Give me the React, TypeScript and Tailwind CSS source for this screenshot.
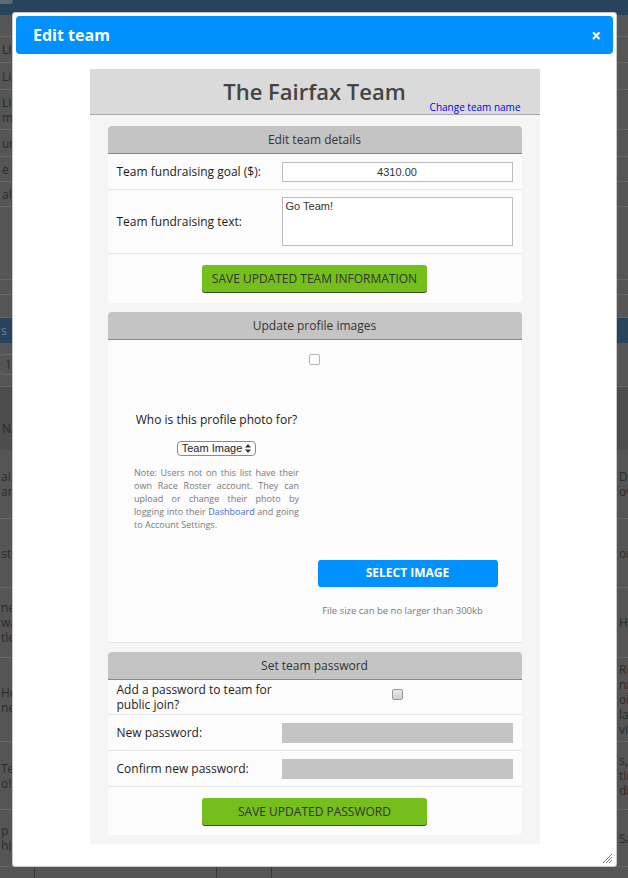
import React from "react";

const bgRows = [
  { h: "h-[22px]", l: "", r: "" },
  { h: "h-[26px]", l: "Lin", r: "" },
  { h: "h-[27px]", l: "Lin", r: "" },
  { h: "h-[40px]", l: "Lin\nm-", r: "" },
  { h: "h-[27px]", l: "un", r: "" },
  { h: "h-[25px]", l: "e P", r: "" },
  { h: "h-[25px]", l: "al", r: "" },
  { h: "h-[73px]", l: "", r: "" },
  { h: "h-[15px]", l: "", r: "" },
  { h: "h-[23px]", l: "", r: "" },
];

const tableRows = [
  { h: "h-[69px]", l: "ai\nam", r: "De\nov" },
  { h: "h-[69px]", l: "ste", r: "on" },
  { h: "h-[70px]", l: "ne\nwa\ntle", r: "Ha" },
  { h: "h-[84px]", l: "Ho\nne", r: "Ro\nnn\noin\nla\nvi" },
  { h: "h-[68px]", l: "Tea\no!", r: "s,\ntin\ndi" },
  { h: "h-[57px]", l: "p c\nhin", r: "Sa" },
];

function Background() {
  return (
    <div className="text-[12px] leading-[15px] text-[#2b2b2b]">
      <div className="h-[15px] bg-[#27445c]">
        <div className="h-[4px] w-[13px] rounded-br-[4px] bg-[#5a6a78]" />
      </div>
      {bgRows.map((r, i) => (
        <div key={i} className={`flex items-center border-b border-[#646464] ${r.h}`}>
          <div className="w-[619px] shrink-0 whitespace-pre-line pl-[2px]">{r.l}</div>
          <div className="whitespace-pre-line">{r.r}</div>
        </div>
      ))}
      <div className="flex h-[25px] items-center bg-[#27445c] pl-[1px] text-[#6f8598]">s</div>
      <div className="flex h-[44px] items-center border-b border-[#646464]">
        <span className="ml-[-6px] rounded-full border border-[#6a6a6a] px-[10px] py-[2px]">1</span>
      </div>
      <div className="flex h-[63px] items-end bg-[#4d4d4d] pb-[14px] pl-[2px]">NA</div>
      {tableRows.map((r, i) => (
        <div key={i} className={`flex items-center border-b border-[#646464] ${r.h}`}>
          <div className="w-[619px] shrink-0 whitespace-pre-line pl-[1px]">{r.l}</div>
          <div className="whitespace-pre-line">{r.r}</div>
        </div>
      ))}
      <div className="flex h-[20px]">
        <div className="w-[35px] border-r border-[#3a3a3a]" />
        <div className="w-[182px] border-r border-[#3a3a3a]" />
        <div className="w-[55px] border-r border-[#3a3a3a]" />
      </div>
    </div>
  );
}

function CardHeader({ children }: { children: React.ReactNode }) {
  return (
    <div className="h-[28px] border-b border-[#888] bg-[#c4c4c4] text-center text-[12px] leading-[27px] text-[#333]">
      {children}
    </div>
  );
}

function GreenButton({ children }: { children: React.ReactNode }) {
  return (
    <button className="mx-auto block h-[27px] w-[225px] rounded-[3px] bg-[#74bf1b] text-[12px] text-[#333] uppercase shadow-[0_1px_0_#3b4a2a]">
      {children}
    </button>
  );
}

// justified note, one line per block so it wraps like the reference
function NoteLine({ children, last }: { children: React.ReactNode; last?: boolean }) {
  return (
    <div className={`whitespace-nowrap ${last ? "text-left" : "text-justify [text-align-last:justify]"}`}>
      {children}
    </div>
  );
}

export default function App() {
  return (
    <div className="relative h-[878px] w-[628px] overflow-hidden bg-[#555] font-['Open_Sans',sans-serif]">
      <Background />

      {/* modal */}
      <div className="absolute left-[12px] top-[12px] h-[855px] w-[605px] rounded-[3px] border border-[#c8c8c8] bg-white p-[3px]">
        <div className="flex h-[38px] items-center justify-between rounded-[4px] bg-[#0091ff] pl-[17px] pr-[12px] text-white">
          <span className="text-[16px] font-bold">Edit team</span>
          <span className="text-[17px] font-bold leading-none">×</span>
        </div>

        <div className="mx-auto mt-[15px] w-[450px] bg-[#f5f5f5] pb-[9px]">
          <div className="h-[46px] border-b border-[#a8a8a8] bg-[#dadada]">
            <div className="pt-[7px] text-center text-[22px] leading-[30px] font-semibold text-[#444]">
              The Fairfax Team
            </div>
            <div className="-mt-[5px] pr-[19px] text-right text-[10px] leading-[12px] text-[#0000ee]">
              Change team name
            </div>
          </div>

          {/* Edit team details */}
          <div className="mx-[18px] mt-[11px] overflow-hidden rounded-[4px] bg-[#fcfcfc]">
            <CardHeader>Edit team details</CardHeader>
            <div className="flex h-[36px] items-center border-b border-[#e6e6e6]">
              <div className="w-[174px] pl-[9px] text-[12px] text-[#1c1c1c]">Team fundraising goal ($):</div>
              <input
                defaultValue="4310.00"
                className="h-[20px] w-[231px] border border-[#bbb] bg-white text-center font-['Liberation_Sans',sans-serif] text-[11px] text-[#333]"
              />
            </div>
            <div className="flex h-[64px] items-center border-b border-[#e6e6e6]">
              <div className="w-[174px] pl-[9px] text-[12px] text-[#1c1c1c]">Team fundraising text:</div>
              <textarea
                defaultValue="Go Team!"
                className="h-[49px] w-[231px] resize-none border border-[#bbb] bg-white px-[3px] py-[1px] font-['Liberation_Sans',sans-serif] text-[11px] leading-[14px] text-[#333]"
              />
            </div>
            <div className="pb-[11px] pt-[11px]">
              <GreenButton>Save updated team information</GreenButton>
            </div>
          </div>

          {/* Update profile images */}
          <div className="mx-[18px] mt-[9px] overflow-hidden rounded-t-[4px] bg-[#fcfcfc]">
            <CardHeader>Update profile images</CardHeader>
            <div className="h-[303px] border-b border-[#e5e5e5] pt-[14px]">
              <span className="mx-auto block h-[11px] w-[11px] rounded-[2px] border border-[#b5b5b5] bg-white" />
              <div className="mt-[47px] flex">
                <div className="w-[210px] pl-[8px] text-center">
                  <div className="text-[12px] leading-[16px] text-[#222]">Who is this profile photo for?</div>
                  <div className="mx-auto mt-[13px] flex h-[15px] w-[79px] items-center justify-center gap-[3px] rounded-[4px] border border-[#8a8a8a] bg-white font-['Liberation_Sans',sans-serif] text-[11px] text-[#222]">
                    Team Image
                    <svg width="6" height="9" viewBox="0 0 6 9">
                      <path d="M0 3.5 L3 0 L6 3.5 Z M0 5.5 L3 9 L6 5.5 Z" fill="#333" />
                    </svg>
                  </div>
                  <div className="mx-auto mt-[10px] w-[165px] text-[9px] leading-[13px] text-[#7a7a7a]">
                    <NoteLine>Note: Users not on this list have their</NoteLine>
                    <NoteLine>own Race Roster account. They can</NoteLine>
                    <NoteLine>upload or change their photo by</NoteLine>
                    <NoteLine>
                      logging into their <span className="text-[#3b6fd8]">Dashboard</span> and going
                    </NoteLine>
                    <NoteLine last>to Account Settings.</NoteLine>
                  </div>
                </div>
                <div className="w-[180px] pt-[147px]">
                  <button className="h-[27px] w-[180px] rounded-[3px] bg-[#0091ff] text-[12px] font-bold text-white">
                    SELECT IMAGE
                  </button>
                  <div className="mt-[17px] pr-[10px] text-center text-[9.5px] leading-[13px] text-[#7a7a7a]">
                    File size can be no larger than 300kb
                  </div>
                </div>
              </div>
            </div>
          </div>

          {/* Set team password */}
          <div className="mx-[18px] mt-[9px] overflow-hidden rounded-[4px] bg-[#fcfcfc]">
            <CardHeader>Set team password</CardHeader>
            <div className="flex h-[35px] items-center border-b border-[#e6e6e6]">
              <div className="w-[174px] pl-[9px] pr-[6px] text-[12px] leading-[15px] text-[#1c1c1c]">
                Add a password to team for public join?
              </div>
              <div className="flex w-[231px] justify-center pb-[5px]">
                <span className="block h-[11px] w-[11px] rounded-[2px] border border-[#999] bg-gradient-to-b from-[#e8e8e8] to-[#cfcfcf]" />
              </div>
            </div>
            <div className="flex h-[36px] items-center border-b border-[#e6e6e6]">
              <div className="w-[174px] pl-[9px] text-[12px] text-[#1c1c1c]">New password:</div>
              <input type="password" className="h-[20px] w-[231px] bg-[#c4c4c4]" />
            </div>
            <div className="flex h-[36px] items-center border-b border-[#e6e6e6]">
              <div className="w-[174px] pl-[9px] text-[12px] text-[#1c1c1c]">Confirm new password:</div>
              <input type="password" className="h-[20px] w-[231px] bg-[#c4c4c4]" />
            </div>
            <div className="pb-[10px] pt-[11px]">
              <GreenButton>Save updated password</GreenButton>
            </div>
          </div>
        </div>

        {/* resize grip */}
        <svg className="absolute bottom-[3px] right-[4px]" width="10" height="10" viewBox="0 0 10 10">
          <path d="M1 10 L10 1 M4 10 L10 4 M7 10 L10 7" stroke="#777" strokeWidth="1" />
        </svg>
      </div>
    </div>
  );
}
